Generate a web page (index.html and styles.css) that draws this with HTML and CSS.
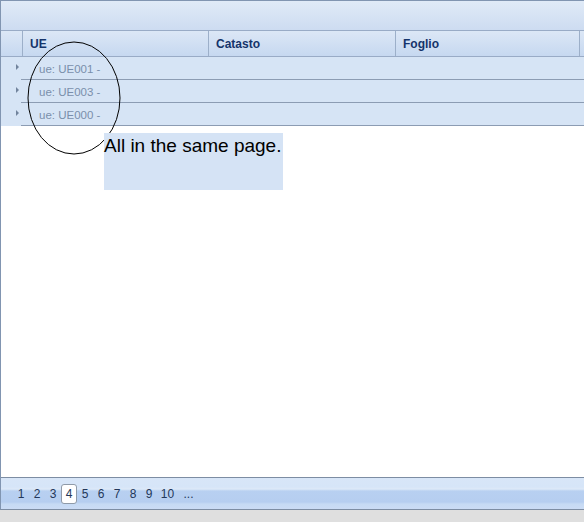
FILE: index.html
```html
<!DOCTYPE html>
<html>
<head>
<meta charset="utf-8">
<link rel="stylesheet" href="styles.css">
</head>
<body>
<div class="grid">
  <div class="toolbar"></div>
  <div class="header">
    <div class="hcell hexp"></div>
    <div class="hcell col-ue">UE</div>
    <div class="hcell col-cat">Catasto</div>
    <div class="hcell col-fog">Foglio</div>
    <div class="hcell hrest"></div>
  </div>
  <div class="gbody">
    <div class="row"><div class="exp"><span class="arrow"></span></div><div class="cell">ue: UE001 -</div></div>
    <div class="row"><div class="exp"><span class="arrow"></span></div><div class="cell">ue: UE003 -</div></div>
    <div class="row"><div class="exp"><span class="arrow"></span></div><div class="cell">ue: UE000 -</div></div>
  </div>
  <div class="pager">
    <span class="pg">1</span><span class="pg">2</span><span class="pg">3</span><span class="pg current">4</span><span class="pg">5</span><span class="pg">6</span><span class="pg">7</span><span class="pg">8</span><span class="pg">9</span><span class="pg wide">10</span><span class="pg wide">...</span>
  </div>
</div>
<svg class="circle" width="110" height="120" viewBox="0 0 110 120">
  <ellipse cx="49" cy="58" rx="46" ry="56" fill="none" stroke="#000" stroke-width="1"/>
</svg>
<div class="note">All in the same page.</div>
</body>
</html>
```
FILE: styles.css
```css
html, body {
  margin: 0;
  padding: 0;
  background: #dfdfdf;
  width: 584px;
  height: 522px;
  overflow: hidden;
  font-family: "DejaVu Sans", Verdana, sans-serif;
}
.grid {
  box-sizing: border-box;
  width: 584px;
  height: 510px;
  background: #fff;
  border-left: 1px solid #8195b1;
  border-top: 1px solid #8195b1;
  border-bottom: 1px solid #7d8da3;
  display: flex;
  flex-direction: column;
}
.toolbar {
  height: 29px;
  border-bottom: 1px solid #99abc6;
  background: linear-gradient(#e0eaf7, #cddcf1);
}
.header {
  display: flex;
  height: 25px;
  border-bottom: 1px solid #99abc6;
  background: linear-gradient(#dce7f6, #c6d8f0);
}
.hcell {
  box-sizing: border-box;
  flex-shrink: 0;
  border-right: 1px solid #9cafc9;
  font-family: "Liberation Sans", Arial, sans-serif;
  font-weight: bold;
  font-size: 12px;
  color: #15346b;
  line-height: 26px;
  padding-left: 7px;
}
.hexp { width: 22px; padding: 0; }
.col-ue { width: 186px; }
.col-cat { width: 187px; }
.col-fog { width: 184px; }
.hrest { flex: 1 1 auto; border-right: none; }
.gbody {
  flex: 1;
}
.row {
  display: flex;
  background: #d6e4f5;
  height: 23px;
}
.exp {
  width: 20px;
  position: relative;
}
.arrow {
  position: absolute;
  left: 15px;
  top: 7px;
  width: 0;
  height: 0;
  border-top: 3px solid transparent;
  border-bottom: 3px solid transparent;
  border-left: 3px solid #72849d;
}
.cell {
  flex: 1;
  border-bottom: 1px solid #8c9cb3;
  font-family: "Liberation Sans", Arial, sans-serif;
  font-size: 11.5px;
  color: #7a8fab;
  padding-left: 18px;
  line-height: 25px;
}
.pager {
  height: 31px;
  border-top: 1px solid #7d8da3;
  background: linear-gradient(#d8e6f8 0, #d6e5f8 9px, #dde9f8 11px, #b8d0f1 13px, #b6cef0 24px, #c6daf4 26px, #cbdcf5 31px);
  display: flex;
  align-items: center;
  padding-left: 12px;
}
.pg {
  box-sizing: border-box;
  width: 16px;
  height: 20px;
  line-height: 20px;
  text-align: center;
  font-family: "Liberation Sans", Arial, sans-serif;
  font-size: 12px;
  color: #23375a;
}
.pg.current {
  background: #fff;
  border: 1px solid #8f9aa8;
  border-radius: 3px;
  line-height: 18px;
}
.pg.wide { width: 21px; }
.circle {
  position: absolute;
  left: 25px;
  top: 40px;
}
.note {
  position: absolute;
  left: 104px;
  top: 133px;
  width: 179px;
  height: 57px;
  background: #d5e3f5;
  font-family: "Liberation Sans", Arial, sans-serif;
  font-size: 19px;
  color: #000;
  line-height: 25px;
  white-space: nowrap;
}
```
